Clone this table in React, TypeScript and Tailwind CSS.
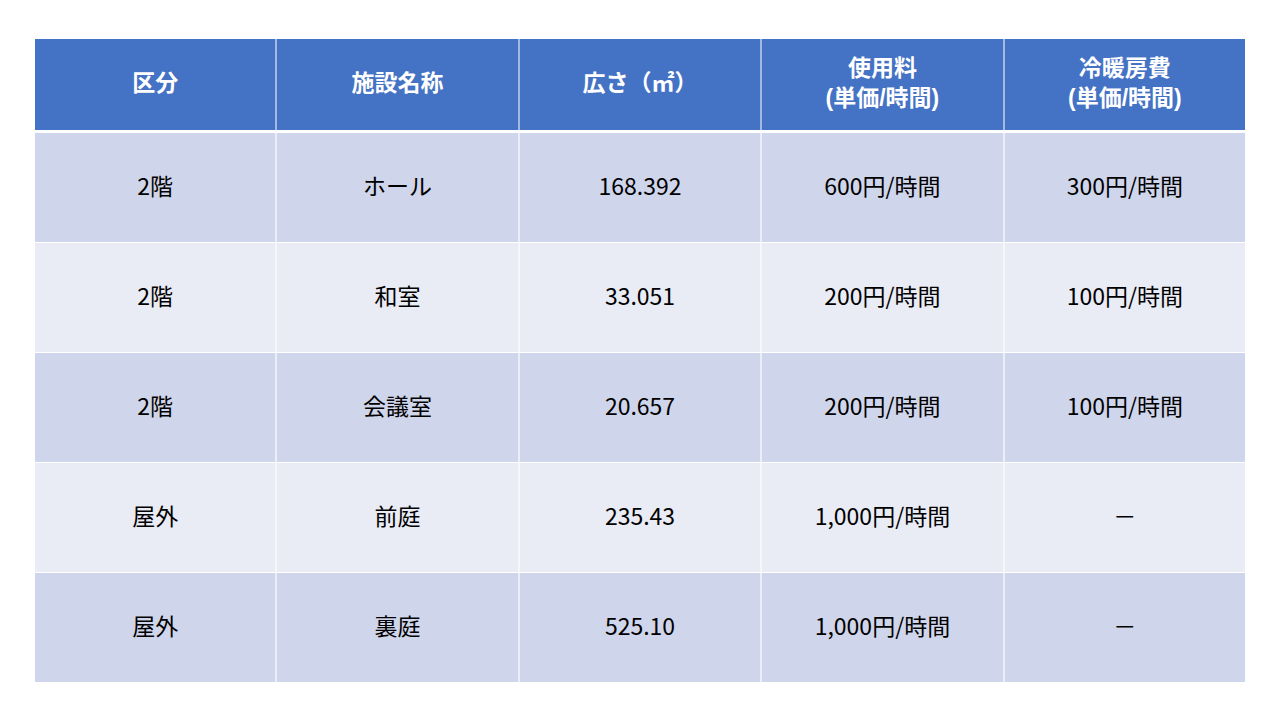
import React from "react";

const header: string[][] = [
  ["区分"],
  ["施設名称"],
  ["広さ（㎡）"],
  ["使用料", "(単価/時間)"],
  ["冷暖房費", "(単価/時間)"],
];

const rows: string[][] = [
  ["2階", "ホール", "168.392", "600円/時間", "300円/時間"],
  ["2階", "和室", "33.051", "200円/時間", "100円/時間"],
  ["2階", "会議室", "20.657", "200円/時間", "100円/時間"],
  ["屋外", "前庭", "235.43", "1,000円/時間", "－"],
  ["屋外", "裏庭", "525.10", "1,000円/時間", "－"],
];

export default function App() {
  return (
    <div
      className="w-[1280px] h-[720px] bg-white pt-[39px] pl-[35px]"
      style={{ fontFamily: '"Noto Sans CJK JP", "Noto Sans", sans-serif' }}
    >
      <div className="w-[1210px] flex flex-col">
        <div className="flex h-[91px] bg-[#4472c4] mb-[3px]">
          {header.map((h, i) => (
            <div
              key={i}
              className={`flex-1 flex flex-col items-center justify-center pb-[3px] text-white font-bold text-[23px] leading-[30px] font-['Liberation_Sans','Noto_Sans_CJK_JP',sans-serif] ${
                i > 0 ? "border-l-2 border-white/50" : ""
              }`}
            >
              {h.map((t, j) => (
                <span key={j} className="block h-[30px] leading-[30px]">
                  {t}
                </span>
              ))}
            </div>
          ))}
        </div>
        <div className="flex flex-col gap-y-[1px]">
          {rows.map((r, ri) => (
            <div
              key={ri}
              className={`flex h-[109px] ${ri % 2 === 0 ? "bg-[#cfd5ea]" : "bg-[#e9ebf5]"}`}
            >
              {r.map((c, ci) => (
                <div
                  key={ci}
                  className={`flex-1 flex items-center justify-center pb-[5px] text-black text-[23px] ${
                    ci > 0 ? "border-l-2 border-white/60" : ""
                  }`}
                >
                  {c}
                </div>
              ))}
            </div>
          ))}
        </div>
      </div>
    </div>
  );
}
